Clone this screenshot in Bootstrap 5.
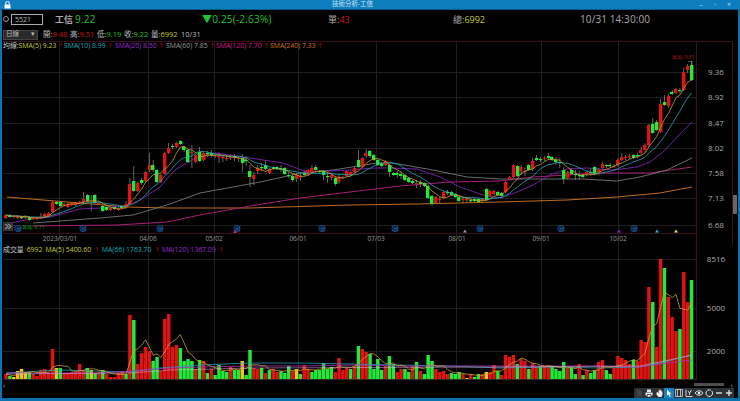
<!DOCTYPE html>
<html lang="zh-Hant">
<head>
<meta charset="utf-8">
<title>技術分析-工信</title>
<link href="https://cdn.jsdelivr.net/npm/bootstrap@5.3.0/dist/css/bootstrap.min.css" rel="stylesheet">
<style>
html,body{height:100%;margin:0;background:#000;overflow:hidden}
body{font-family:"Open Sans","Noto Sans CJK TC",sans-serif;font-size:7.5px;line-height:1;color:#bbb}
.app-frame{width:740px;height:401px;border:solid #0b73ad;border-width:0 2px 3px 2px;background:#000}
.title-strip{height:10px;margin:0 -2px;padding:0 4px;background:#0d7dbd;border-bottom:1px solid #075a88;color:#cfe6f3;font-size:6.5px}
.title-text{flex:1;text-align:center}
.win-btn{width:14px;text-align:center;color:#bcdcee;font-size:7px}
.quote-row{height:18px;color:#aaa}
.q-radio{width:6px;height:6px;border:1px solid #999;border-radius:50%;margin:0 2px 0 1px}
.q-code{width:32px;height:11px;border:1px solid #aaa;padding-left:3px;line-height:9px;color:#bbb;font-size:7px;background:#000}
.q-name{width:20px;margin-left:12px;font-size:9px;font-weight:700}
.q-last{width:127px;font-size:10px;letter-spacing:.2px;color:#21c42c}
.q-chg{width:126px;font-size:10px;letter-spacing:.2px;color:#21c42c}
.q-vol{width:125px;font-size:9px}
.q-tot{width:127px;font-size:9px}
.q-time{font-size:10px;letter-spacing:.1px;color:#aaa}
.ohlc-row{height:13px}
.period-box{width:35px;height:10px;margin:0 5px 0 1px;padding:0 2px;background:#2a2a2a;border:1px solid #444;font-size:6.5px;color:#bbb}
.ohlc-item{width:27px;white-space:nowrap}
.ohlc-date{margin-left:3px}
.c-red{color:#d01414}.c-green{color:#21c42c}.c-yel{color:#c8c832}
.c-cy{color:#22a6b4}.c-pu{color:#9a2bd0}.c-gr{color:#9a9a9a}.c-mg{color:#d01a8c}.c-or{color:#d2701e}
.pane{position:relative}
.pane svg{display:block}
.pane-legend{position:absolute;left:1px;top:1px;white-space:nowrap;font-size:6.9px;line-height:8px}
.lg-vol span{margin-right:3px}
.lg-a{font-size:5.5px}
.lg-vol .lg-a{margin-right:2px}
.lg-item{display:inline-block}
.lg-head{color:#ccc}
.w1{width:61px}.w2{width:51px}.w3{width:51px}.w4{width:50px}.w5{width:54px}
.scroller{height:7px;padding:0 5px 0 1px;color:#aaa;font-size:8px}
.thumb{width:30px;height:3px;margin-right:7px;background:#4e4e4e}
.tool-strip{height:10px;padding-right:4px}
.tool-btn{width:10px;height:10px;background:#2b3135;display:block}
.tool-on{background:#1682c4}
.v-thumb{position:absolute;left:731px;top:154px;width:4px;height:19px;background:#666}
</style>
</head>
<body>
<div class="app-frame d-flex flex-column">
  <div class="title-strip d-flex align-items-center">
    <svg width="7" height="8" viewBox="0 0 7 8"><rect x="0.5" y="3.5" width="6" height="4" fill="#fff"/><path d="M1.8 3.5V2a1.7 1.7 0 0 1 3.4 0v1.5" fill="none" stroke="#fff"/></svg>
    <div class="title-text">技術分析-工信</div>
    <span class="win-btn">–</span><span class="win-btn">▫</span><span class="win-btn">×</span>
  </div>
  <div class="quote-row d-flex align-items-center">
    <span class="q-radio"></span>
    <div class="q-code">5521</div>
    <div class="q-name">工信</div>
    <div class="q-last">9.22</div>
    <div class="q-chg">▼0.25(-2.63%)</div>
    <div class="q-vol">單:<span class="c-red">43</span></div>
    <div class="q-tot">總:<span class="c-yel">6992</span></div>
    <div class="q-time">10/31 14:30:00</div>
  </div>
  <div class="ohlc-row d-flex align-items-center">
    <div class="period-box d-flex justify-content-between align-items-center"><span>日線</span><span>▾</span></div>
    <span class="ohlc-item">開:<span class="c-red">9.48</span></span>
    <span class="ohlc-item">高:<span class="c-red">9.51</span></span>
    <span class="ohlc-item">低:<span class="c-green">9.19</span></span>
    <span class="ohlc-item">收:<span class="c-green">9.22</span></span>
    <span class="ohlc-item">量:<span class="c-yel">6992</span></span>
    <span class="ohlc-date">10/31</span>
  </div>
  <div class="pane">
    <svg id="priceChart" width="736" height="204" viewBox="2 41 736 204" font-family="'Open Sans',sans-serif">
      <g stroke="#1f1f1f" stroke-width="1">
        <path d="M3 72.5H696M3 97.5H696M3 123.5H696M3 148.5H696M3 173.5H696M3 198.5H696M3 225.5H696"/>
        <path d="M59.5 41V245M148.5 41V245M214.5 41V245M298.5 41V245M376.5 41V245M456.5 41V245M541.5 41V245M618.5 41V245"/>
      </g>
      <path d="M3 41.5H732M3 233.5H696" stroke="#3c0f1e"/>
      <path d="M696.5 41V245M732.5 41V245" stroke="#3a1420"/>
      <g id="mainSeries"></g>
      <g fill="#1c4f86" stroke="#1a5fa6" stroke-width=".7" fill-opacity=".25" id="weekMarks"></g>
      <g>
        <path d="M233 233l2-3.5 2 3.5z" fill="#c81a8c"/>
        <path d="M463 232.500l2-3 2 3z" fill="#999"/>
        <path d="M617 232.500l2-3 2 3z" fill="#a021c8"/>
        <path d="M655 232.500l2-3 2 3z" fill="#22b4d2"/>
        <path d="M674 232.500l2-3 2 3z" fill="#e6dc28"/>
      </g>
      <g font-size="5" >
        <text x="22" y="229" fill="#1f9a2a">最低: 6.71</text>
        <text x="672" y="59" fill="#b01414">最高: 9.51</text>
      </g>
      <path d="M688 61.500H692V66" stroke="#888" fill="none" stroke-width=".6"/>
      <rect x="3" y="222" width="10" height="9" fill="#333"/>
      <path d="M5.500 224l2.500 2.500-2.500 2.500M8.500 224l2.500 2.500-2.500 2.500" stroke="#ddd" fill="none" stroke-width=".9"/>
      <g font-size="8" fill="#aaa" text-anchor="middle">
        <text x="716" y="75">9.36</text><text x="716" y="100">8.92</text><text x="716" y="126">8.47</text>
        <text x="716" y="151">8.02</text><text x="716" y="176">7.58</text><text x="716" y="201">7.13</text><text x="716" y="228">6.68</text>
      </g>
      <g font-size="6.500" fill="#999" text-anchor="middle">
        <text x="60" y="240.500">2023/03/01</text><text x="148" y="240.500">04/06</text><text x="214" y="240.500">05/02</text>
        <text x="298" y="240.500">06/01</text><text x="376" y="240.500">07/03</text><text x="457" y="240.500">08/01</text>
        <text x="541" y="240.500">09/01</text><text x="618" y="240.500">10/02</text>
      </g>
    </svg>
    <div class="pane-legend">
      <span class="lg-item w1"><span class="lg-head">均線:</span><span class="c-yel">SMA(5) 9.23</span> <span class="c-red lg-a">↑</span></span><span class="lg-item w2 c-cy">SMA(10) 8.99 <span class="c-red lg-a">↑</span></span><span class="lg-item w3 c-pu">SMA(20) 8.50 <span class="c-red lg-a">↑</span></span><span class="lg-item w4 c-gr">SMA(60) 7.85 <span class="c-red lg-a">↑</span></span><span class="lg-item w5 c-mg">SMA(120) 7.70 <span class="c-red lg-a">↑</span></span><span class="lg-item c-or">SMA(240) 7.33 <span class="c-red lg-a">↑</span></span>
    </div>
    <div class="v-thumb"></div>
  </div>
  <div class="pane">
    <svg id="volChart" width="736" height="136" viewBox="2 245 736 136" font-family="'Open Sans',sans-serif">
      <g stroke="#1f1f1f"><path d="M3 259.500H696M3 308.500H696M3 351.500H696"/>
      <path d="M59.500 245V380M148.500 245V380M214.500 245V380M298.500 245V380M376.500 245V380M456.500 245V380M541.500 245V380M618.500 245V380"/></g>
      <path d="M3 379.500H696" stroke="#2a2a2a"/>
      <path d="M696.500 245V380" stroke="#3a1420"/>
      <g id="volSeries"></g>
      <g font-size="8" fill="#aaa" text-anchor="middle">
        <text x="716" y="262">8516</text><text x="716" y="311">5000</text><text x="716" y="354">2000</text>
      </g>
    </svg>
    <div class="pane-legend lg-vol">
      <span class="lg-head">成交量</span><span class="c-yel">6992</span><span class="c-yel">MA(5) 5400.60</span><span class="c-red lg-a">↑</span><span class="c-cy">MA(66) 1763.70</span><span class="c-red lg-a">↑</span><span class="c-pu">MA(120) 1367.09</span><span class="c-red lg-a">↑</span>
    </div>
  </div>
  <div class="scroller d-flex align-items-center justify-content-between">
    <span>‹</span>
    <span class="d-flex align-items-center ms-auto"><span class="thumb"></span><span>›</span></span>
  </div>
  <div class="tool-strip d-flex justify-content-end">
    <svg class="tool-btn" viewBox="0 0 10 10"><path d="M2.500 1.500h4l1.500 1.500v5.500h-5.500z" fill="#3d4347"/></svg>
    <svg class="tool-btn" viewBox="0 0 10 10"><path d="M3 1.500h4v2.500H3zM1.500 4.500h7v3H7V6H3v1.500H1.500zM3.500 6.800h3v2h-3z" fill="#e8e8e8"/></svg>
    <svg class="tool-btn" viewBox="0 0 10 10"><path d="M2.500 4.500v2l2 2.500h3l1-2.500V3.500h-1v-1h-1v-1h-1v1h-1v3l-1-1.500z" fill="#eee"/></svg>
    <svg class="tool-btn tool-on" viewBox="0 0 10 10"><path d="M3 1.500l4.500 4.500H5.600l1.100 2.400-1 .5-1.100-2.500L3 7.500z" fill="#fff"/></svg>
    <svg class="tool-btn" viewBox="0 0 10 10"><path d="M1.500 1.500h7v7h-7zM3.500 1.500v7M6.500 1.500v7" fill="none" stroke="#ddd" stroke-width=".8"/></svg>
    <svg class="tool-btn" viewBox="0 0 10 10"><path d="M2 1.500v7h6.500M4 3l1.500 2L7.500 2M5.500 5v2" fill="none" stroke="#eee" stroke-width=".9"/></svg>
    <svg class="tool-btn" viewBox="0 0 10 10"><path d="M1 5c2.400-3 5.600-3 8 0-2.400 3-5.600 3-8 0z" fill="none" stroke="#eee" stroke-width=".9"/><circle cx="5" cy="5" r="1.300" fill="#eee"/></svg>
    <svg class="tool-btn" viewBox="0 0 10 10"><path d="M7.800 3a3.300 3.300 0 1 1-1-.8" fill="none" stroke="#eee" stroke-width="1"/></svg>
    <svg class="tool-btn" viewBox="0 0 10 10"><path d="M2 4.300h6v1.400H2z" fill="#ddd"/></svg>
    <svg class="tool-btn" viewBox="0 0 10 10"><path d="M2 4.300h2.300V2h1.400v2.300H8v1.400H5.700V8H4.300V5.700H2z" fill="#ddd"/></svg>
  </div>
</div>
<script>
(function(){
var NS='http://www.w3.org/2000/svg',step=3.873,x0=6;
var c="r215-218 g215-217 r216-217 r216-218 g217-218 r216-218 g217-220 r218-219 r218-219 r217-218:213-219 r214-217 r213-216 r202-212 g202-204 g202-206 r204-205 r204-207 r203-205 r203-205 r202-203 r199-202:192-203 g195-201 r200-201:195-211 g195-203 r203-204 g206-211 g207-210 r208-210 g207-209 r208-210 g206-208 r204-208:201-209 r184-204:178-205 g181-191:166-192 r183-191 g180-183:178-185 r172-181 r165-170:153-172 g165-170:160-172 g170-182 r175-182 r153-174 r148-153:143-154 g146-147:144-149 r143-147 g141-144 g147-150:146-152 g150-162 r152-153:145-168 r155-162 g152-161:147-162 r153-160 g153-154:151-157 g153-155:150-157 r155-156:153-158 r156-157:152-163 r157-158:154-162 r158-159:155-161 r157-158:154-160 g156-158:154-161 r158-159:156-162 g158-163:154-172 g160-161:156-166 g171-177:165-187 r175-179:172-185 r168-171:165-174 g167-168:163-171 g165-169:160-170 r169-173 g167-169 g167-169 g168-169:165-172 g168-174 g175-176:172-178 g176-180:174-182 r175-179:173-182 r176-177:173-181 g173-175:170-176 r170-175 r168-172:165-173 g167-170:165-172 g171-172 g171-175:170-180 g176-177:172-183 r175-178:173-180 g178-184:176-186 r177-182:174-184 r177-178 r171-176 r172-175 r168-172:167-174 g160-167:150-168 r158-167 r153-156:149-158 g151-156:150-158 g155-160 g160-165 g163-166 r161-165 g165-172:164-177 g173-175 g173-175:171-178 g174-176:172-179 g175-180 g178-182 g181-183 r183-184:180-188 g182-184:180-187 g183-186 g186-198 g196-204:195-206 r197-203 r199-200:197-203 r192-198 g192-193:190-195 g192-195 g194-197 g197-201 r199-200:197-203 r199-200:197-203 g200-201:198-203 g199-201 g199-202 r199-201 g189-200 r191-196 r191-194 g192-195 g193-196 r182-192 r177-179 r165-177 g166-176 r167-171:165-175 r171-172:168-176 g165-170 r161-169:158-171 g158-160:155-161 g159-160:157-162 r158-159:156-161 g156-158:153-160 g157-160 g160-162:157-165 g162-163:158-168 g170-179:167-184 r172-178 g170-174:168-175 g174-175:170-180 g175-176:171-180 g175-177 r172-174:171-176 g172-173:168-176 g167-174 r169-172 r164-168:162-170 g165-166:164-168 g165-166:163-168 r166-167:164-168 r160-165:158-167 r157-160:153-161 r157-158:155-160 r156-157:154-159 g155-158 g155-156:153-158 r150-153:147-155 r145-150:143-152 r125-145:124-147 g124-133:118-134 g122-130:120-131 r104-132:99-133 g102-105:95-106 r96-106:94-108 g92-94:90-95 r89-93:88-94 g90-91:88-93 r72-90:68-91 r66-70:64-73 g65-80:61-81".split(' ');
var pts=function(a){return a.map(function(p){return p.join(',')}).join(' ')};
var bar=function(g,x,y,w,h,f){var e=document.createElementNS(NS,'rect');e.setAttribute('x',x);e.setAttribute('y',y);e.setAttribute('width',w);e.setAttribute('height',h);e.setAttribute('fill',f);g.appendChild(e)};
var line=function(g,p,col,w){var e=document.createElementNS(NS,'polyline');e.setAttribute('points',pts(p));e.setAttribute('fill','none');e.setAttribute('stroke',col);e.setAttribute('stroke-width',w||.8);e.setAttribute('stroke-linejoin','round');g.appendChild(e)};
var main=document.getElementById('mainSeries'),closes=[];
var RED='#e01212',GRN='#22e83a',WICK='#8c8c8c';
var parsed=c.map(function(s){var m=s.match(/^([rg])(\d+)-(\d+)(?::(\d+)-(\d+))?$/);var o={t:m[1],a:+m[2],b:+m[3],hi:m[4]?+m[4]:+m[2]-1,lo:m[5]?+m[5]:+m[3]+1};closes.push(o.t=='r'?o.a:o.b);return o});
function ma(arr,n){return arr.map(function(_,i){var s=0,k=0;for(var j=Math.max(0,i-n+1);j<=i;j++){s+=arr[j];k++}return [+(x0+i*step).toFixed(1),+(s/k).toFixed(1)]})}
parsed.forEach(function(o,i){var x=x0+i*step;bar(main,x-.35,o.hi,.7,o.lo-o.hi,WICK);});
line(main,[[7,197],[67,202],[127,207],[167,208],[250,208],[350,205],[417,204],[500,202],[567,200],[617,197],[660,193],[692,187]],'#c06a22',1);
line(main,[[33,226],[117,225],[167,222],[200,215],[250,206],[300,198],[350,192],[400,186],[450,182],[500,181],[533,177],[600,173],[650,173],[692,167]],'#a81e74',1);
line(main,[[33,223],[100,218],[133,215],[167,205],[200,193],[233,187],[260,182],[283,177],[300,173],[333,170],[377,163],[393,163],[433,170],[467,177],[500,179],[533,179],[583,179],[617,181],[640,177],[667,170],[692,158]],'#777',.9);
line(main,[[6,224],[30,219],[50,217],[80,209],[100,208],[125,206],[140,200],[160,187],[175,170],[195,158],[215,153],[250,158],[283,163],[307,172],[350,170],[373,168],[390,168],[417,169],[440,177],[460,187],[483,195],[500,198],[517,192],[533,185],[550,175],[567,169],[587,168],[613,170],[637,167],[650,162],[663,152],[677,137],[692,122]],'#7a26b0',.9);
parsed.forEach(function(o,i){var x=x0+i*step;bar(main,Math.round(x-1.7),o.a,3.4,Math.max(1.2,o.b-o.a),o.t=='r'?RED:GRN)});
line(main,ma(closes,10),'#2aa6b8',.8);
line(main,ma(closes,5),'#c8a032',.8);
var wk=document.getElementById('weekMarks');
[18,83,160,237,322,395,480,561,634].forEach(function(x){var e=document.createElementNS(NS,'circle');e.setAttribute('cx',x);e.setAttribute('cy',228.500);e.setAttribute('r',3.2);wk.appendChild(e);var t=document.createElementNS(NS,'text');t.setAttribute('x',x);t.setAttribute('y',230.500);t.setAttribute('font-size','4.500');t.setAttribute('text-anchor','middle');t.setAttribute('fill','#2a6ec0');t.setAttribute('stroke','none');t.setAttribute('fill-opacity','1');t.textContent='周';wk.appendChild(t)});
var v="r5 g3 y2 y8 y10 y7 g7 r5 r3 r9 r10 r6 r30 y11 g11 r6 r6 r7 r7 r15 r9 g11 y9 g6 r7 g9 r5 r2 r2 r6 r8 g5 r64 g59 r15 r26 r32 r28 g18 g22 r8 r60 r65 r32 r34 g31 g18 g20 g18 r10 g19 r18 g6 r10 g4 g14 g8 g7 r12 g9 g9 y18 g4 g29 r11 r10 g11 r6 g9 r10 r7 g8 g6 g13 r8 y10 g5 r14 r10 g7 g9 g9 g16 g10 g12 r7 r21 r9 r11 g10 r13 g33 r30 r27 g25 g10 g20 g9 r13 g23 g15 r7 r10 g10 g7 r13 g17 r8 g5 g24 g18 r10 r7 r8 r5 g6 g5 g7 r5 y1 r5 g2 g5 r5 y7 r7 r14 g8 r4 r24 r22 r24 g15 r20 r18 g10 r16 r12 g13 r13 r13 g13 g10 g8 g17 r11 g11 g5 r15 g4 r9 g6 g9 r17 r19 g9 g5 r11 r23 r21 r19 r15 g19 r18 r39 r37 r92 g77 r32 r120 g111 r82 r62 r48 g50 r107 r77 g99".split(' ');
var vg=document.getElementById('volSeries'),base=379,hs=[];
var VC={r:'#e01212',g:'#22e83a',y:'#f0c020'};
v.forEach(function(s,i){var h=+s.slice(1);hs.push(base-h);bar(vg,x0+i*step-1.75,base-h,3.5,h,VC[s[0]])});
line(vg,[[6,373],[60,370],[130,372],[160,368],[200,365],[250,363],[300,363],[350,364],[400,365],[450,366],[500,368],[550,367],[600,368],[640,367],[660,363],[692,355]],'#2a9db0',.8);
line(vg,[[6,373],[100,373],[130,371],[170,368],[200,367],[250,366],[300,366],[350,365],[400,366],[450,366],[500,366],[550,366],[600,366],[640,367],[660,364],[692,360]],'#b030c0',.8);
line(vg,ma(hs,5),'#c8a032',.8);
line(vg,[[6,374],[130,373],[170,370],[250,368],[500,367],[640,366],[660,362],[692,355]],'#e8b8e0',.5);
})();
</script>
</body>
</html>
